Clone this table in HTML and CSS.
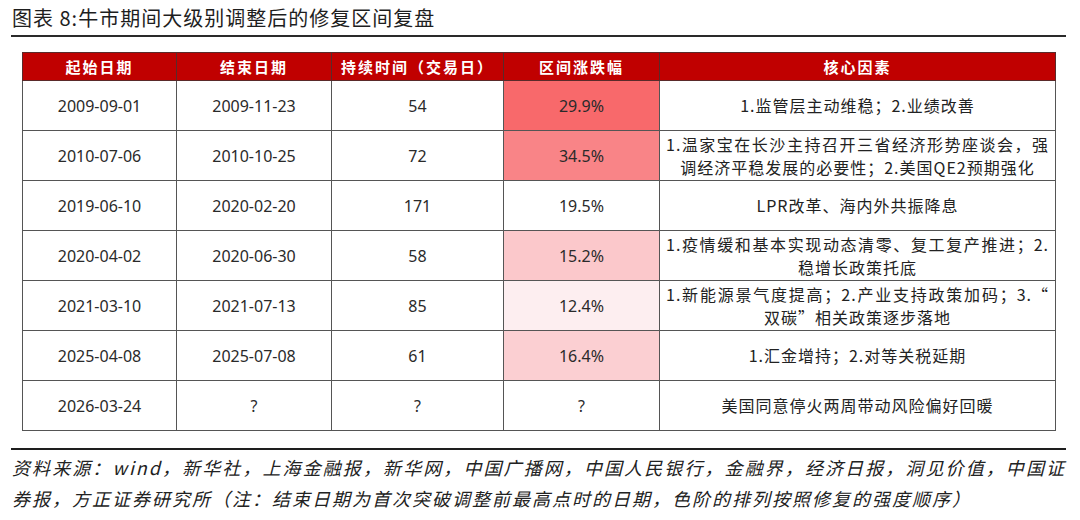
FILE: index.html
```html
<!DOCTYPE html>
<html lang="zh-CN">
<head>
<meta charset="utf-8">
<title>图表 8</title>
<link rel="stylesheet" href="styles.css">
</head>
<body>
<div class="page">
  <h1 class="title">图表 8:牛市期间大级别调整后的修复区间复盘</h1>
  <table class="grid">
    <colgroup>
      <col class="c1"><col class="c2"><col class="c3"><col class="c4"><col class="c5">
    </colgroup>
    <thead>
      <tr>
        <th>起始日期</th>
        <th>结束日期</th>
        <th>持续时间（交易日）</th>
        <th>区间涨跌幅</th>
        <th>核心因素</th>
      </tr>
    </thead>
    <tbody>
      <tr>
        <td>2009-09-01</td><td>2009-11-23</td><td>54</td>
        <td class="pct heat1">29.9%</td>
        <td class="why">1.监管层主动维稳；2.业绩改善</td>
      </tr>
      <tr>
        <td>2010-07-06</td><td>2010-10-25</td><td>72</td>
        <td class="pct heat2">34.5%</td>
        <td class="why">1.温家宝在长沙主持召开三省经济形势座谈会，强调经济平稳发展的必要性；2.美国QE2预期强化</td>
      </tr>
      <tr>
        <td>2019-06-10</td><td>2020-02-20</td><td>171</td>
        <td class="pct">19.5%</td>
        <td class="why">LPR改革、海内外共振降息</td>
      </tr>
      <tr>
        <td>2020-04-02</td><td>2020-06-30</td><td>58</td>
        <td class="pct heat4">15.2%</td>
        <td class="why">1.疫情缓和基本实现动态清零、复工复产推进；2.稳增长政策托底</td>
      </tr>
      <tr>
        <td>2021-03-10</td><td>2021-07-13</td><td>85</td>
        <td class="pct heat5">12.4%</td>
        <td class="why loose">1.新能源景气度提高；2.产业支持政策加码；3.“双碳”相关政策逐步落地</td>
      </tr>
      <tr>
        <td>2025-04-08</td><td>2025-07-08</td><td>61</td>
        <td class="pct heat3">16.4%</td>
        <td class="why">1.汇金增持；2.对等关税延期</td>
      </tr>
      <tr>
        <td>2026-03-24</td><td>?</td><td>?</td>
        <td class="pct">?</td>
        <td class="why">美国同意停火两周带动风险偏好回暖</td>
      </tr>
    </tbody>
  </table>
  <p class="source">资料来源：wind，新华社，上海金融报，新华网，中国广播网，中国人民银行，金融界，经济日报，洞见价值，中国证券报，方正证券研究所（注：结束日期为首次突破调整前最高点时的日期，色阶的排列按照修复的强度顺序）</p>
</div>
</body>
</html>
```

FILE: styles.css
```css
* { box-sizing: border-box; }

html, body {
  margin: 0;
  padding: 0;
  background: #ffffff;
}

.page {
  width: 1080px;
  height: 520px;
  overflow: hidden;
  font-family: "Noto Sans CJK SC", sans-serif;
  color: #222;
}

.title {
  margin: 0 14px 0 11px;
  padding: 4px 0 0 1px;
  height: 37px;
  border-bottom: 2px solid #2a2a2a;
  font-size: 20px;
  font-weight: 400;
  line-height: 28px;
  letter-spacing: 1px;
  color: #1e1e1e;
}

.grid {
  margin: 15px 0 0 22px;
  width: 1033px;
  border-collapse: collapse;
  table-layout: fixed;
}

.c1 { width: 154px; }
.c2 { width: 155px; }
.c3 { width: 172px; }
.c4 { width: 156px; }
.c5 { width: 396px; }

.grid th {
  height: 28px;
  padding: 0;
  background: #c00000;
  color: #ffffff;
  font-size: 15px;
  font-weight: 700;
  letter-spacing: 2px;
  border: 1px solid #5a2a2a;
  text-align: center;
  vertical-align: middle;
}

.grid td {
  height: 50px;
  padding: 0;
  border: 1px solid #555;
  text-align: center;
  vertical-align: middle;
  font-family: "Noto Sans", "Noto Sans CJK SC", sans-serif;
  font-size: 16px;
  color: #2a2a2a;
}

.grid td.why {
  padding: 0 6px;
  font-family: "Noto Sans CJK SC", sans-serif;
  font-size: 16px;
  line-height: 23px;
  letter-spacing: 1px;
  text-align: justify;
  text-align-last: center;
  color: #222;
}

.grid td.loose {
  line-break: anywhere;
}

.heat1 { background: #f8696b; }
.heat2 { background: #f98487; }
.heat3 { background: #fbcfd2; }
.heat4 { background: #fbc8cb; }
.heat5 { background: #fdeef0; }

.source {
  margin: 17px 14px 0 11px;
  padding: 2px 0 0 1px;
  border-top: 2px solid #1e1e1e;
  font-size: 18px;
  font-style: italic;
  line-height: 31px;
  letter-spacing: 2px;
  text-align: justify;
  color: #222;
}
```
